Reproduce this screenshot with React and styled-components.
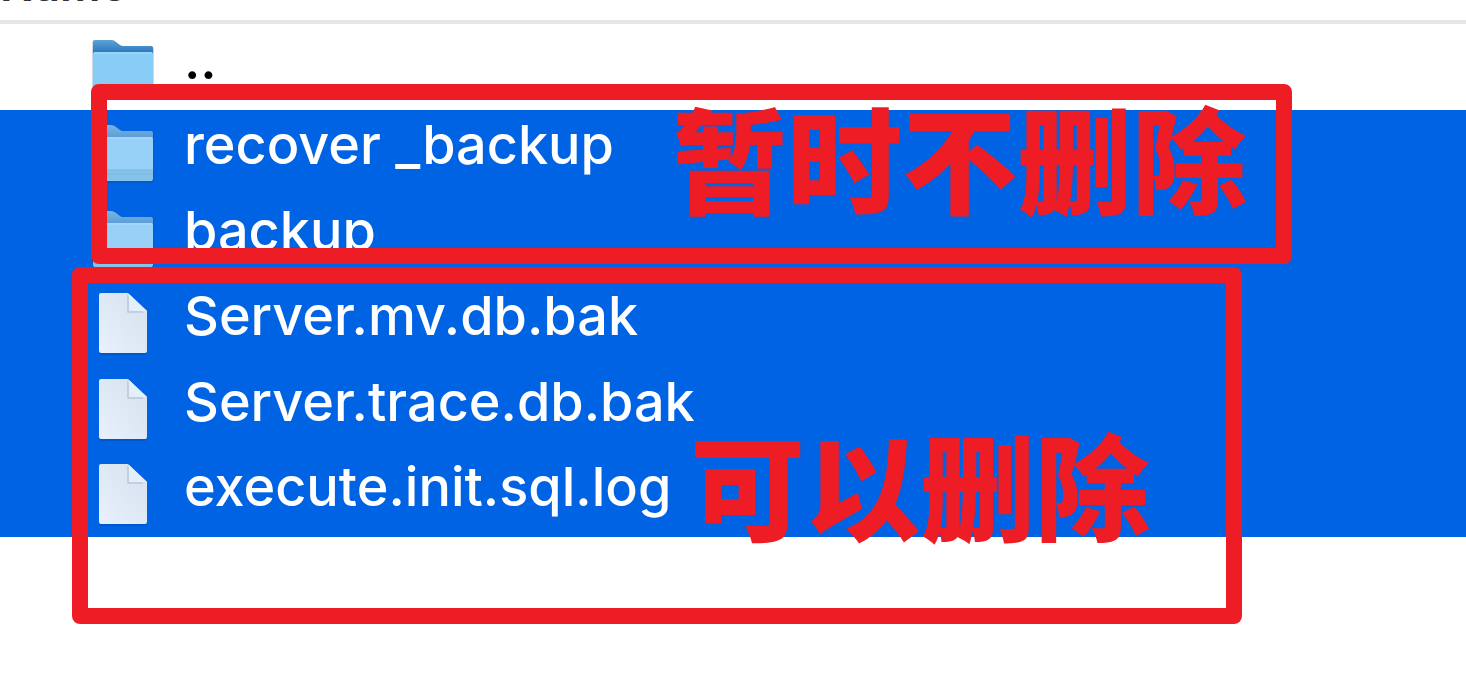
import React from "react";
import styled, { createGlobalStyle } from "styled-components";

const GlobalStyle = createGlobalStyle`
  body {
    margin: 0;
    background: #fff;
    overflow: hidden;
    font-family: Inter, "Liberation Sans", sans-serif;
  }
`;

const Panel = styled.main`
  position: relative;
  min-height: 100vh;
`;

const HeaderBar = styled.header`
  display: flex;
  align-items: flex-end;
  height: 20px;
  overflow: hidden;
  border-bottom: 4px solid #e6e6e6;
`;

const ColumnTitle = styled.h1`
  margin: 0 0 7px;
  font-size: 45px;
  line-height: 56px;
  font-weight: 600;
  color: #333;
`;

const FileList = styled.ul`
  display: grid;
  grid-auto-rows: 1fr;
  height: 513px;
  margin: 0;
  padding: 0;
  list-style: none;
`;

const FileRow = styled.li`
  display: flex;
  align-items: center;
  gap: 24px;
  padding-left: 88px;
  background: ${(p) => (p.$selected ? "#0063e3" : "#fff")};
  color: ${(p) => (p.$selected ? "#fff" : "#000")};
`;

const IconBox = styled.span`
  display: flex;
  width: 72px;
  height: 72px;
  svg {
    width: 72px;
    height: 72px;
  }
`;

const FileName = styled.span`
  font-size: 54px;
  line-height: 68px;
  font-weight: 500;
  white-space: nowrap;
  padding-bottom: 14px;
`;

const Mark = styled.section`
  position: absolute;
  box-sizing: border-box;
  left: ${(p) => p.$left}px;
  top: ${(p) => p.$top}px;
  width: ${(p) => p.$width}px;
  height: ${(p) => p.$height}px;
  border: 16px solid #ee1c25;
  border-radius: 8px;
`;

const Note = styled.p`
  position: absolute;
  left: ${(p) => p.$left}px;
  top: ${(p) => p.$top}px;
  margin: 0;
  color: #ee1c25;
  font-family: "Noto Sans CJK SC", sans-serif;
  font-size: 115px;
  line-height: 120px;
  font-weight: 900;
  white-space: nowrap;
`;

function FolderIcon({ selected }) {
  const id = selected ? "folder-selected" : "folder";
  return (
    <svg viewBox="0 0 72 72" aria-hidden="true">
      <defs>
        <linearGradient id={id} x1="0" y1="0" x2="0" y2="1">
          <stop offset="0" stopColor={selected ? "#77b4df" : "#5ba4d4"} />
          <stop offset="0.600" stopColor={selected ? "#5a9cd8" : "#2b74bf"} />
        </linearGradient>
      </defs>
      <path d="M4 63V12q0-3 3-3h17q2 0 4 2l3 3q2 1 4 1h27q4 0 4 3v45q0 4-4 4H8q-4 0-4-4z" fill="#0b3c70" opacity=".2" />
      <path d="M5 31V11q0-2 2-2h16q3 0 5 2l4 3q1 1 3 1h28q2 0 2 2v14z" fill={`url(#${id})`} />
      <path d="M5 23q0-2 2-2h56q2 0 2 2v39q0 3-3 3H8q-3 0-3-3z" fill={selected ? "#98d1f8" : "#88cdf6"} />
      <path d="M5 54h60v8q0 3-3 3H8q-3 0-3-3z" fill="#86c3ea" />
      <path d="M5 54h60M5 58h60" stroke="#7ab8df" />
      <path d="M6 22h58" stroke="#abdcfa" />
    </svg>
  );
}

function DocumentIcon() {
  return (
    <svg viewBox="0 0 72 72" aria-hidden="true">
      <defs>
        <linearGradient id="paper" x1="1" y1="0" x2="0" y2="1">
          <stop offset="0" stopColor="#d5e1ed" />
          <stop offset="1" stopColor="#e8f1fd" />
        </linearGradient>
      </defs>
      <path d="M13 8h27l19 19v38q0 3-3 3H14q-3 0-3-3V10z" fill="#003a90" opacity=".3" />
      <path d="M13 6h27l19 18v40q0 2-2 2H13q-2 0-2-2V8q0-2 2-2z" fill="url(#paper)" />
      <path d="M39 7v18q0 1 1 1h16z" fill="#c3cfdd" />
      <path d="M41 7v16q0 1 1 1h17z" fill="#e4effc" />
    </svg>
  );
}

const files = [
  { name: "..", folder: true, selected: false },
  { name: "recover _backup", folder: true, selected: true },
  { name: "backup", folder: true, selected: true },
  { name: "Server.mv.db.bak", selected: true },
  { name: "Server.trace.db.bak", selected: true },
  { name: "execute.init.sql.log", selected: true },
];

export default function App() {
  return (
    <Panel>
      <GlobalStyle />
      <HeaderBar>
        <ColumnTitle>Name</ColumnTitle>
      </HeaderBar>
      <FileList>
        {files.map((file) => (
          <FileRow key={file.name} $selected={file.selected}>
            <IconBox>
              {file.folder ? <FolderIcon selected={file.selected} /> : <DocumentIcon />}
            </IconBox>
            <FileName>{file.name}</FileName>
          </FileRow>
        ))}
      </FileList>
      <Mark $left={91} $top={84} $width={1201} $height={180} />
      <Note $left={672} $top={95}>暂时不删除</Note>
      <Mark $left={72} $top={267} $width={1170} $height={357} />
      <Note $left={690} $top={422}>可以删除</Note>
    </Panel>
  );
}
